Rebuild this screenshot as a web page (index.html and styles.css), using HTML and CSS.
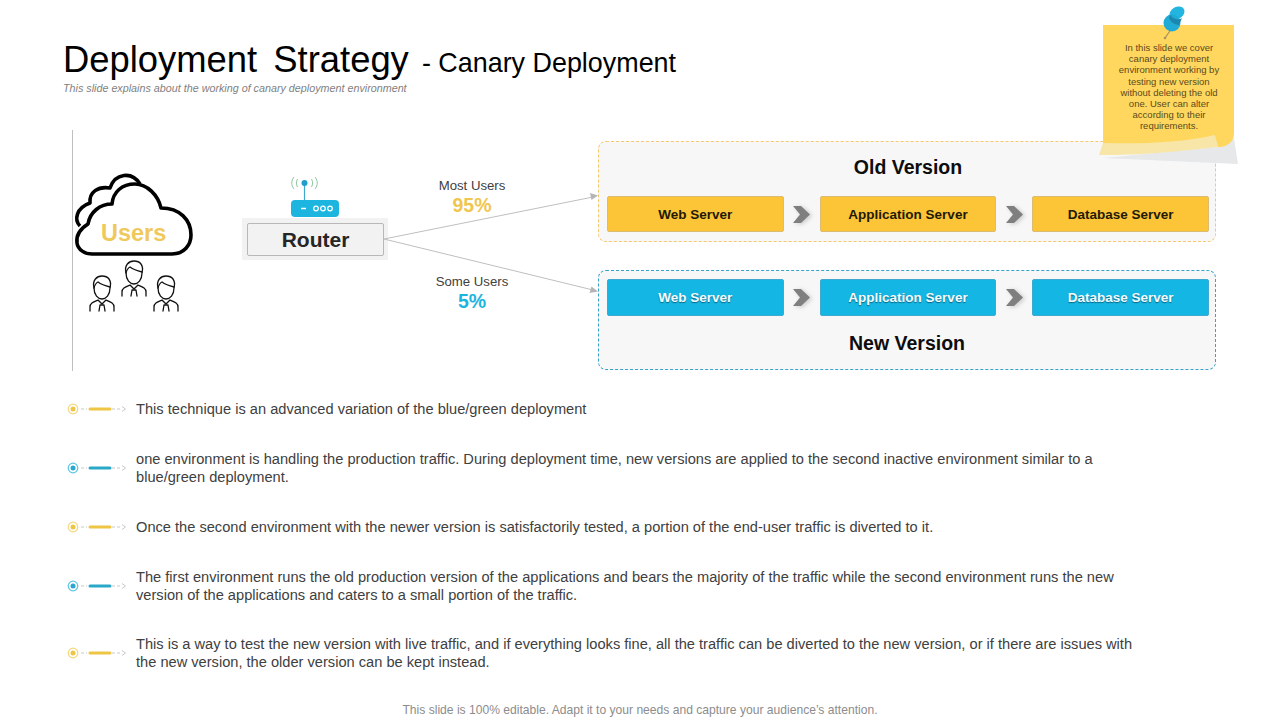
FILE: index.html
```html
<!DOCTYPE html>
<html lang="en">
<head>
<meta charset="utf-8">
<title>Deployment Strategy - Canary Deployment</title>
<link rel="stylesheet" href="styles.css">
</head>
<body>
<svg class="defs" width="0" height="0" aria-hidden="true">
  <defs>
    <symbol id="person" viewBox="0 0 26 37">
      <g fill="none" stroke="#111" stroke-width="1.3" stroke-linecap="round" stroke-linejoin="round">
        <path d="M5 13 C3 5 8 1 13 1 C19 1 23 5 21 13 C21 20 17 24 13 24 C9 24 5 20 5 13 Z"/>
        <path d="M5 13 C6 9 7 8 9 7 C13 10 17 11 21 12"/>
        <path d="M1 36 V32 C1 28 4 27 9 25 L13 29 L17 25 C22 27 25 28 25 32 V36"/>
        <path d="M11 30 L10 36 M15 30 L16 36 M11 30 H15"/>
      </g>
    </symbol>
    <symbol id="chevron" viewBox="0 0 17 17">
      <path d="M0 0 H8 L17 8.500 L8 17 H0 L7 8.500 Z" fill="#7f7f7f"/>
    </symbol>
    <symbol id="marker-y" viewBox="0 0 60 12">
      <circle cx="6" cy="6" r="4.800" fill="#fff" stroke="#f5d77e" stroke-width="1.200"/>
      <circle cx="6" cy="6" r="2.500" fill="#eec643"/>
      <path d="M14 6 H20 M45 6 H54" stroke="#c9c9c9" stroke-width="1" stroke-dasharray="3 2"/>
      <path d="M23 6 H43" stroke="#eec643" stroke-width="3" stroke-linecap="round"/>
      <path d="M55 3.500 L58.500 6 L55 8.500" fill="none" stroke="#c9c9c9" stroke-width="1"/>
    </symbol>
    <symbol id="marker-b" viewBox="0 0 60 12">
      <circle cx="6" cy="6" r="4.800" fill="#fff" stroke="#5cc6e6" stroke-width="1.200"/>
      <circle cx="6" cy="6" r="2.500" fill="#2aa8cf"/>
      <path d="M14 6 H20 M45 6 H54" stroke="#c9c9c9" stroke-width="1" stroke-dasharray="3 2"/>
      <path d="M23 6 H43" stroke="#2aa8c8" stroke-width="3" stroke-linecap="round"/>
      <path d="M55 3.500 L58.500 6 L55 8.500" fill="none" stroke="#c9c9c9" stroke-width="1"/>
    </symbol>
  </defs>
</svg>

<main class="slide">
  <header class="head">
    <h1 class="title">Deployment Strategy <span class="title-sub">- Canary Deployment</span></h1>
    <p class="lead">This slide explains about the working of canary deployment environment</p>
  </header>

  <section class="diagram">
    <svg class="links" viewBox="0 0 1144 241" aria-hidden="true">
      <path d="M311 109 L520 67" stroke="#bfbfbf" stroke-width="1" fill="none"/>
      <path d="M311 109 L520 160" stroke="#bfbfbf" stroke-width="1" fill="none"/>
      <path d="M525 65.500 L517 63 L518.500 70 Z" fill="#b5b5b5"/>
      <path d="M525 161.500 L518.500 156.500 L516.500 163 Z" fill="#b5b5b5"/>
    </svg>

    <div class="users">
      <div class="cloud">
        <svg class="cloud-art" viewBox="73 172 122 86" aria-hidden="true">
          <g fill="none" stroke="#000" stroke-width="3.600" stroke-linejoin="round">
            <path d="M80 226 C74 220 76 208 90 203 C89 192 98 186 110 188 C115 173 132 171 140 184"/>
            <path d="M92 254 H172 C184 254 191 245 191 235 C191 220 180 208 161 208 C158 195 147 184 135 184 C122 184 113 192 112 204 C100 204 90 212 88 224 C80 229 76 236 77 243 C78 250 85 254 92 254 Z" fill="#fff"/>
          </g>
        </svg>
        <span class="cloud-label">Users</span>
      </div>
      <div class="people">
        <svg class="person"><use href="#person"/></svg>
        <svg class="person person-up"><use href="#person"/></svg>
        <svg class="person"><use href="#person"/></svg>
      </div>
    </div>

    <div class="router">
      <svg class="router-icon" viewBox="0 0 50 42" aria-hidden="true">
        <g fill="none" stroke="#8fc6a3" stroke-width="1">
          <path d="M4 2 C1 6 1 10 4 14"/><path d="M7.500 4 C6 7 6 9 7.500 12"/>
          <path d="M25 2 C28 6 28 10 25 14"/><path d="M21.500 4 C23 7 23 9 21.500 12"/>
        </g>
        <path d="M14.500 8 V26" stroke="#3fa9cc" stroke-width="1.200"/>
        <circle cx="14.500" cy="8" r="3" fill="#1f9fca"/>
        <rect x="1" y="25" width="48" height="17" rx="4" fill="#1cb5e0"/>
        <path d="M11 33.500 H16" stroke="#fff" stroke-width="1.500"/>
        <g fill="none" stroke="#fff" stroke-width="1.200">
          <circle cx="26" cy="33.500" r="2.300"/><circle cx="33" cy="33.500" r="2.300"/><circle cx="40" cy="33.500" r="2.300"/>
        </g>
      </svg>
      <div class="router-frame"><div class="router-box">Router</div></div>
    </div>

    <div class="routes">
      <div class="route">
        <span class="route-name">Most Users</span>
        <strong class="route-pct pct-y">95%</strong>
      </div>
      <div class="route">
        <span class="route-name">Some Users</span>
        <strong class="route-pct pct-b">5%</strong>
      </div>
    </div>

    <div class="versions">
      <div class="panel panel-y">
        <h2 class="panel-title">Old Version</h2>
        <div class="servers">
          <div class="server server-y">Web Server</div>
          <svg class="chev"><use href="#chevron"/></svg>
          <div class="server server-y">Application Server</div>
          <svg class="chev"><use href="#chevron"/></svg>
          <div class="server server-y">Database Server</div>
        </div>
      </div>
      <div class="panel panel-b">
        <div class="servers">
          <div class="server server-b">Web Server</div>
          <svg class="chev"><use href="#chevron"/></svg>
          <div class="server server-b">Application Server</div>
          <svg class="chev"><use href="#chevron"/></svg>
          <div class="server server-b">Database Server</div>
        </div>
        <h2 class="panel-title">New Version</h2>
      </div>
    </div>
  </section>

  <ul class="points">
    <li class="point"><svg class="marker"><use href="#marker-y"/></svg><p>This technique is an advanced variation of the blue/green deployment</p></li>
    <li class="point"><svg class="marker"><use href="#marker-b"/></svg><p>one environment is handling the production traffic. During deployment time, new versions are applied to the second inactive environment similar to a<br>blue/green deployment.</p></li>
    <li class="point"><svg class="marker"><use href="#marker-y"/></svg><p>Once the second environment with the newer version is satisfactorily tested, a portion of the end-user traffic is diverted to it.</p></li>
    <li class="point"><svg class="marker"><use href="#marker-b"/></svg><p>The first environment runs the old production version of the applications and bears the majority of the traffic while the second environment runs the new<br>version of the applications and caters to a small portion of the traffic.</p></li>
    <li class="point"><svg class="marker"><use href="#marker-y"/></svg><p>This is a way to test the new version with live traffic, and if everything looks fine, all the traffic can be diverted to the new version, or if there are issues with<br>the new version, the older version can be kept instead.</p></li>
  </ul>

  <footer class="foot">This slide is 100% editable. Adapt it to your needs and capture your audience’s attention.</footer>

  <aside class="note">
    <svg class="note-art" viewBox="1095 0 150 170" aria-hidden="true">
      <path d="M1103 158 L1238 164 L1234 138 L1218 147 Z" fill="#e6e8ea"/>
      <path d="M1103 25 H1234 V134 C1234 141 1228 146 1221 147 L1103 146 Z" fill="#ffd75e"/>
      <path d="M1103 143 L1099 155 C1140 156 1190 150 1218 147 L1215 135 C1180 143 1140 144 1103 143 Z" fill="#f7e6a8"/>
      <path d="M1172 28 L1165 38" stroke="#a8935f" stroke-width="1.300"/>
      <circle cx="1165" cy="38" r="1.300" fill="#a8935f"/>
      <ellipse cx="1177" cy="13" rx="8" ry="6" transform="rotate(-30 1177 13)" fill="#22b5e0"/>
      <circle cx="1172" cy="23" r="8.500" fill="#1fabd6"/>
      <path d="M1170 15 C1173 19 1178 21 1182 18 L1179 25 C1174 25 1170 21 1169 18 Z" fill="#1b87ad"/>
    </svg>
    <p class="note-text">In this slide we cover<br>canary deployment<br>environment working by<br>testing new version<br>without deleting the old<br>one. User can alter<br>according to their<br>requirements.</p>
  </aside>
</main>
</body>
</html>
```
FILE: styles.css
```css
* { box-sizing: border-box; }
html, body { margin: 0; padding: 0; background: #fff; }
body { font-family: "Liberation Sans", Arial, sans-serif; color: #333; }
.defs { position: absolute; }

.slide {
  position: relative;
  width: 1280px;
  height: 720px;
  overflow: hidden;
  display: flex;
  flex-direction: column;
  background: #fff;
}

/* header */
.head { padding: 39px 0 0 63px; height: 130px; }
.title {
  margin: 0;
  font-size: 36.400px;
  line-height: 42px;
  font-weight: 400;
  color: #000;
  word-spacing: 6px;
}
.title-sub { font-size: 26.900px; margin-left: -3px; word-spacing: 0; }
.lead {
  margin: -2px 0 0;
  font-size: 10.750px;
  line-height: 12px;
  font-style: italic;
  color: #7f7f7f;
}

/* diagram */
.diagram {
  position: relative;
  display: flex;
  flex: none;
  width: 1144px;
  height: 241px;
  margin-left: 72px;
  border-left: 1px solid #bfbfbf;
}
.links { position: absolute; left: 0; top: 0; z-index: 1; width: 1144px; height: 241px; }

.users { position: relative; flex: none; width: 169px; padding-top: 42px; }
.cloud { position: relative; width: 122px; height: 86px; }
.cloud-art { display: block; width: 122px; height: 86px; }
.cloud-label {
  position: absolute;
  left: 28px;
  top: 47px;
  font-size: 23.500px;
  line-height: 28px;
  font-weight: 700;
  color: #f0c95c;
}
.people { display: flex; gap: 6px; margin: 3px 0 0 16px; padding-top: 14px; }
.person { display: block; width: 26px; height: 37px; }
.person-up { margin-top: -15px; }

.router { position: relative; flex: none; width: 146px; padding-top: 45px; }
.router-icon { display: block; width: 50px; height: 42px; margin-left: 48px; }
.router-frame { width: 146px; height: 42px; margin-top: 1px; padding: 5px 4px 4px 5px; background: #f2f2f2; }
.router-box {
  height: 33px;
  border: 1px solid #b8b8b8;
  border-radius: 2px;
  background: #f2f2f2;
  font-size: 21px;
  line-height: 31px;
  font-weight: 700;
  text-align: center;
  color: #262626;
}

.routes { position: relative; flex: none; width: 210px; padding-top: 48px; }
.route { display: flex; flex-direction: column; align-items: center; width: 168px; height: 96px; }
.route-name { font-size: 13.200px; line-height: 15px; color: #404040; }
.route-pct { font-size: 19.500px; line-height: 24px; font-weight: 700; }
.pct-y { color: #f0c64f; }
.pct-b { color: #1cb5e0; }

.versions { position: relative; flex: none; width: 618px; padding-top: 11px; display: flex; flex-direction: column; gap: 28px; }
.panel {
  height: 101px;
  padding: 0 6px 0 8px;
  border-radius: 8px;
  background: #f7f7f7;
}
.panel-y { border: 1px dashed #f5c96c; }
.panel-b { height: 100px; border: 1px dashed #35a3cb; padding-top: 8px; }
.panel-title {
  margin: 0;
  height: 54px;
  padding-top: 13px;
  font-size: 19.500px;
  line-height: 24px;
  font-weight: 700;
  text-align: center;
  color: #0d0d0d;
}
.panel-b .panel-title { height: auto; padding-top: 15px; padding-right: 2px; }
.servers { display: flex; align-items: center; }
.server {
  flex: 1 1 0;
  height: 36px;
  border-radius: 2px;
  font-size: 13.500px;
  font-weight: 700;
  text-align: center;
}
.server-y { background: #fcc537; border: 1px solid #dcbc70; line-height: 35px; color: #231a05; }
.server-b { height: 37px; background: #14b6e3; border: 1px solid #3fa9cf; line-height: 35px; color: #f4fbfe; text-shadow: 0 1px 1px rgba(0, 50, 70, 0.6); }
.chev { flex: none; width: 17px; height: 17px; margin: 0 9.500px; filter: drop-shadow(2px 1px 2px rgba(0, 0, 0, 0.18)); }

/* points */
.points {
  list-style: none;
  margin: 29px 0 0;
  padding: 0 0 0 67px;
  display: flex;
  flex-direction: column;
  gap: 32px;
}
.point { display: flex; align-items: center; gap: 9px; }
.point:last-child { margin-top: -1px; }
.marker { flex: none; width: 60px; height: 12px; }
.point p { margin: 0; font-size: 14.630px; line-height: 18px; color: #404040; }

/* footer */
.foot {
  margin-top: auto;
  padding-bottom: 3px;
  font-size: 12.100px;
  line-height: 14px;
  text-align: center;
  color: #8c8c8c;
}

/* sticky note */
.note { position: absolute; left: 1095px; top: 0; width: 150px; height: 170px; }
.note-art { position: absolute; left: 0; top: 0; width: 150px; height: 170px; }
.note-text {
  position: relative;
  margin: 0;
  padding-top: 42px;
  width: 148px;
  font-size: 9.500px;
  line-height: 11.200px;
  text-align: center;
  color: #5b4a1c;
}
```
